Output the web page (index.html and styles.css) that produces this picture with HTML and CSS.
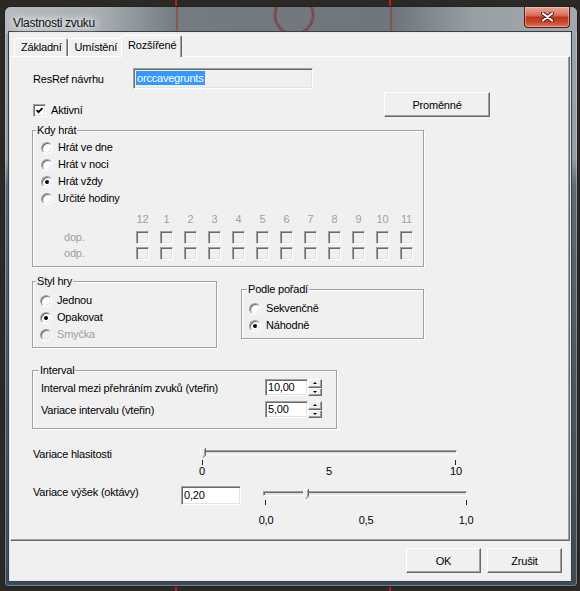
FILE: index.html
```html
<!DOCTYPE html>
<html lang="cs">
  <head>
    <meta charset="UTF-8" />
    <meta name="viewport" content="width=device-width, initial-scale=1.0" />
    <title>Vlastnosti zvuku</title>
    <link rel="stylesheet" href="styles.css">
  </head>
  <body>
    <div class="window">
      <!-- Title bar -->
      <div class="titlebar">
        <span class="title">Vlastnosti zvuku</span>
        <button class="close" aria-label="Zavřít">
          <svg width="13" height="10" viewBox="0 0 13 10">
            <path d="M2 1.5 L11 8.5 M11 1.5 L2 8.5" stroke="#4a1a12" stroke-width="4" stroke-linecap="round" />
            <path d="M2 1.5 L11 8.5 M11 1.5 L2 8.5" stroke="#fff" stroke-width="2.2" stroke-linecap="round" />
          </svg>
        </button>
      </div>

      <div class="client">
        <!-- Tabs -->
        <div class="tabs">
          <span class="tab">Základní</span>
          <span class="tab">Umístění</span>
          <span class="tab active">Rozšířené</span>
        </div>

        <div class="panel">
          <div class="field-row">
            <label class="field-label">ResRef návrhu</label>
            <div class="textbox readonly"><span class="selected">orccavegrunts</span></div>
          </div>

          <div class="check-row">
            <label class="check-label">
              <span class="checkbox">
                <svg width="7" height="7" viewBox="0 0 7 7">
                  <path d="M0.5 3 L2.5 5.2 L6.5 1" fill="none" stroke="#000" stroke-width="1.8" />
                </svg>
              </span>
              Aktivní
            </label>
            <button class="btn btn-vars">Proměnné</button>
          </div>

          <!-- When to play -->
          <div class="group group-when">
            <span class="group-title">Kdy hrát</span>
            <div class="option"><span class="radio"></span>Hrát ve dne</div>
            <div class="option"><span class="radio"></span>Hrát v noci</div>
            <div class="option"><span class="radio checked"></span>Hrát vždy</div>
            <div class="option"><span class="radio"></span>Určité hodiny</div>

            <div class="hours">
              <span></span>
              <span class="hour">12</span>
              <span class="hour">1</span>
              <span class="hour">2</span>
              <span class="hour">3</span>
              <span class="hour">4</span>
              <span class="hour">5</span>
              <span class="hour">6</span>
              <span class="hour">7</span>
              <span class="hour">8</span>
              <span class="hour">9</span>
              <span class="hour">10</span>
              <span class="hour">11</span>

              <span class="hours-label">dop.</span>
              <span class="checkbox disabled"></span>
              <span class="checkbox disabled"></span>
              <span class="checkbox disabled"></span>
              <span class="checkbox disabled"></span>
              <span class="checkbox disabled"></span>
              <span class="checkbox disabled"></span>
              <span class="checkbox disabled"></span>
              <span class="checkbox disabled"></span>
              <span class="checkbox disabled"></span>
              <span class="checkbox disabled"></span>
              <span class="checkbox disabled"></span>
              <span class="checkbox disabled"></span>

              <span class="hours-label">odp.</span>
              <span class="checkbox disabled"></span>
              <span class="checkbox disabled"></span>
              <span class="checkbox disabled"></span>
              <span class="checkbox disabled"></span>
              <span class="checkbox disabled"></span>
              <span class="checkbox disabled"></span>
              <span class="checkbox disabled"></span>
              <span class="checkbox disabled"></span>
              <span class="checkbox disabled"></span>
              <span class="checkbox disabled"></span>
              <span class="checkbox disabled"></span>
              <span class="checkbox disabled"></span>
            </div>
          </div>

          <!-- Play style / order -->
          <div class="group-row">
            <div class="group group-style">
              <span class="group-title">Styl hry</span>
              <div class="option"><span class="radio"></span>Jednou</div>
              <div class="option"><span class="radio checked"></span>Opakovat</div>
              <div class="option disabled"><span class="radio disabled"></span>Smyčka</div>
            </div>
            <div class="group group-order">
              <span class="group-title">Podle pořadí</span>
              <div class="option"><span class="radio"></span>Sekvenčně</div>
              <div class="option"><span class="radio checked"></span>Náhodně</div>
            </div>
          </div>

          <!-- Interval -->
          <div class="group group-interval">
            <span class="group-title">Interval</span>
            <div class="spin-row">
              <span class="spin-label">Interval mezi přehráním zvuků (vteřin)</span>
              <div class="textbox number">10,00</div>
              <div class="spin"><span class="spin-btn up"></span><span class="spin-btn down"></span></div>
            </div>
            <div class="spin-row">
              <span class="spin-label">Variace intervalu (vteřin)</span>
              <div class="textbox number">5,00</div>
              <div class="spin"><span class="spin-btn up"></span><span class="spin-btn down"></span></div>
            </div>
          </div>

          <!-- Volume variation -->
          <div class="slider-row volume">
            <span class="slider-label">Variace hlasitosti</span>
            <div class="slider">
              <div class="track"></div>
              <svg class="thumb" width="6" height="10" viewBox="0 0 6 10">
                <polygon points="0,0 6,0 6,7 3,10 0,7" fill="#f0f0f0" />
                <path d="M0.5 7 V0.5 H5" fill="none" stroke="#fff" />
                <path d="M5.5 0 V7.2 L3 9.7" fill="none" stroke="#696969" />
                <path d="M4.5 1 V7 L3 8.5" fill="none" stroke="#a0a0a0" />
              </svg>
              <div class="ticks"></div>
              <div class="scale"><span>0</span><span>5</span><span>10</span></div>
            </div>
          </div>

          <!-- Pitch variation -->
          <div class="slider-row pitch">
            <span class="slider-label">Variace výšek (oktávy)</span>
            <div class="textbox pitch-value">0,20</div>
            <div class="slider">
              <div class="track"></div>
              <svg class="thumb" width="6" height="10" viewBox="0 0 6 10">
                <polygon points="0,0 6,0 6,7 3,10 0,7" fill="#f0f0f0" />
                <path d="M0.5 7 V0.5 H5" fill="none" stroke="#fff" />
                <path d="M5.5 0 V7.2 L3 9.7" fill="none" stroke="#696969" />
                <path d="M4.5 1 V7 L3 8.5" fill="none" stroke="#a0a0a0" />
              </svg>
              <div class="ticks"></div>
              <div class="scale"><span>0,0</span><span>0,5</span><span>1,0</span></div>
            </div>
          </div>
        </div>

        <div class="footer">
          <button class="btn">OK</button>
          <button class="btn">Zrušit</button>
        </div>
      </div>
    </div>
  </body>
</html>
```

FILE: styles.css
```css
body {
  margin: 0;
  width: 580px;
  height: 591px;
  overflow: hidden;
  font-family: "Liberation Sans", Arial, sans-serif;
  font-size: 11px;
  letter-spacing: -0.2px;
  color: #000;
  background:
    linear-gradient(90deg, transparent 175px, #b32020 175px, #b32020 177px, transparent 177px,
      transparent 389px, #b32020 389px, #b32020 391px, transparent 391px),
    #2c2925;
}

/* window frame */
.window {
  box-sizing: border-box;
  width: 574px;
  height: 581px;
  margin: 6px 0 0 4px;
  padding: 0 7px 6px 5px;
  border: 1px solid #1d232a;
  border-radius: 7px 7px 4px 4px;
  background: linear-gradient(180deg, #9fa4a9 0, #979ca1 26%, #5f6a74 31%, #4d5a66 60%, #3e4a56 100%);
  box-shadow: inset 0 0 0 1px rgba(255, 255, 255, 0.3);
}
.titlebar {
  display: flex;
  align-items: flex-start;
  height: 26px;
  margin: 0 -7px 0 -5px;
  padding: 0 7px 0 5px;
  border-radius: 6px 6px 0 0;
  background:
    linear-gradient(90deg, transparent 171px, rgba(150, 40, 40, 0.45) 171px, rgba(150, 40, 40, 0.45) 173px, transparent 173px,
      transparent 385px, rgba(150, 40, 40, 0.45) 385px, rgba(150, 40, 40, 0.45) 387px, transparent 387px),
    radial-gradient(circle at 289px 8px, transparent 17px, rgba(130, 35, 35, 0.5) 18px, rgba(130, 35, 35, 0.5) 20px, transparent 21px),
    linear-gradient(90deg, #b7bbbf 0, #a9aeb2 95px, #757b81 170px, #6f757b 390px, #9a9fa4 470px, #a3a8ac 100%);
}
.title {
  margin-top: 8px;
  padding-left: 3px;
  font-size: 12px;
  line-height: 16px;
  letter-spacing: -0.3px;
  color: #111;
  text-shadow: 0 0 6px #fff, 0 0 10px #fff, 0 0 14px rgba(255, 255, 255, 0.8);
}
.close {
  display: flex;
  align-items: center;
  justify-content: center;
  width: 46px;
  height: 21px;
  margin-left: auto;
  padding: 0;
  border: 1px solid #4c1d14;
  border-top: 0;
  border-radius: 0 0 4px 4px;
  background: linear-gradient(180deg, #e9a697 0, #dc735f 40%, #c0341c 52%, #c8452b 75%, #e07556 100%);
  box-shadow: inset 0 0 0 1px rgba(255, 220, 210, 0.45);
}

.client {
  box-sizing: border-box;
  width: 560px;
  height: 547px;
  background: #f0f0f0;
  box-shadow: 0 0 0 1px #e6eaee, 0 0 0 2px #34414d;
}

/* tabs */
.tabs {
  display: flex;
  align-items: flex-end;
  box-sizing: border-box;
  height: 23px;
  padding-left: 4px;
}
.tab {
  box-sizing: border-box;
  height: 18px;
  padding: 2px 5px 0 6px;
  line-height: 13px;
  white-space: nowrap;
  border: 1px solid;
  border-color: #fff #696969 transparent #fff;
  border-bottom: 0;
  border-radius: 2px 2px 0 0;
  box-shadow: inset -1px 0 #a0a0a0;
}
.tab.active {
  position: relative;
  z-index: 1;
  height: 22px;
  padding-top: 3px;
  margin: 0 -2px -1px;
  background: #f0f0f0;
}
.panel {
  box-sizing: border-box;
  height: 485px;
  padding: 11px 0 0 21px;
  border: 1px solid;
  border-color: #fff #696969 #696969 #fff;
  box-shadow: inset -1px -1px #a0a0a0;
}
.footer {
  display: flex;
  justify-content: flex-end;
  gap: 6px;
  padding: 7px 8px 0 0;
}

/* controls */
.btn {
  box-sizing: border-box;
  width: 75px;
  height: 25px;
  padding: 0;
  font: inherit;
  letter-spacing: inherit;
  color: #000;
  background: #f0f0f0;
  border: 1px solid;
  border-color: #fff #696969 #696969 #fff;
  box-shadow: inset -1px -1px #a0a0a0;
}
.textbox {
  box-sizing: border-box;
  background: #fff;
  border: 1px solid;
  border-color: #a0a0a0 #fff #fff #a0a0a0;
  box-shadow: inset 1px 1px #696969, inset -1px -1px #e3e3e3;
  white-space: nowrap;
}
.textbox.readonly {
  background: #f0f0f0;
}
.checkbox {
  box-sizing: border-box;
  display: flex;
  align-items: center;
  justify-content: center;
  flex: none;
  width: 13px;
  height: 13px;
  background: #fff;
  border: 1px solid;
  border-color: #a0a0a0 #fff #fff #a0a0a0;
  box-shadow: inset 1px 1px #696969, inset -1px -1px #e3e3e3;
}
.checkbox.disabled {
  background: #f0f0f0;
}
.radio {
  box-sizing: border-box;
  position: relative;
  flex: none;
  width: 12px;
  height: 12px;
  border-radius: 50%;
  background: #fff;
  border: 1px solid;
  border-color: #a0a0a0 #fff #fff #a0a0a0;
  box-shadow: inset 1px 1px #696969, inset -1px -1px #e3e3e3;
}
.radio.checked::after {
  content: "";
  position: absolute;
  left: 3px;
  top: 3px;
  width: 4px;
  height: 4px;
  border-radius: 50%;
  background: #000;
}
.radio.disabled {
  background: #f0f0f0;
}
.option {
  display: flex;
  align-items: center;
  gap: 5px;
  height: 17px;
  line-height: 13px;
}
.option.disabled {
  color: #a0a0a0;
}

/* top rows */
.field-row {
  display: flex;
  align-items: center;
  height: 21px;
}
.field-label {
  width: 100px;
  padding-left: 1px;
}
.field-row .textbox {
  width: 180px;
  height: 21px;
  padding: 2px 0 0 2px;
  line-height: 14px;
}
.selected {
  display: inline-block;
  padding: 0 1px;
  background: #3399ff;
  color: #fff;
}
.check-row {
  display: flex;
  align-items: flex-end;
  width: 458px;
  height: 25px;
  margin-top: 3px;
}
.check-label {
  display: flex;
  align-items: center;
  gap: 5px;
  margin-left: 1px;
  line-height: 13px;
}
.btn-vars {
  width: 106px;
  margin-left: auto;
}

/* group boxes */
.group {
  box-sizing: border-box;
  position: relative;
  border: 1px solid #a0a0a0;
  box-shadow: 1px 1px #fff, inset 1px 1px #fff;
}
.group-title {
  position: absolute;
  top: -7px;
  left: 3px;
  padding: 0 1px;
  line-height: 13px;
  background: #f0f0f0;
}
.group-when {
  width: 392px;
  margin-top: 13px;
  padding: 8px 0 6px 8px;
}
.hours {
  display: grid;
  grid-template-columns: 84px repeat(12, 13px);
  grid-template-rows: 18px 16px 13px;
  column-gap: 11px;
  align-items: start;
  margin-top: 6px;
  line-height: 13px;
  color: #a0a0a0;
}
.hour {
  text-align: center;
}
.hours-label {
  padding-left: 23px;
}
.group-row {
  display: flex;
  align-items: flex-start;
  margin-top: 14px;
}
.group-style {
  width: 185px;
  padding: 10px 0 4px 7px;
}
.group-order {
  width: 183px;
  margin: 8px 0 0 24px;
  padding: 10px 0 4px 7px;
}
.group-order .group-title {
  left: 5px;
}
.group-interval {
  width: 305px;
  margin-top: 22px;
  padding: 7px 0 6px 8px;
}
.group-interval .group-title {
  left: 6px;
}
.spin-row {
  display: flex;
  align-items: flex-start;
  height: 22px;
}
.spin-label {
  width: 224px;
  margin-top: 4px;
  line-height: 13px;
  white-space: nowrap;
}
.textbox.number {
  width: 43px;
  height: 17px;
  margin-top: 1px;
  padding: 1px 0 0 2px;
  line-height: 13px;
}
.spin {
  display: flex;
  flex-direction: column;
  width: 14px;
  height: 17px;
  margin-top: 1px;
}
.spin-btn {
  box-sizing: border-box;
  display: flex;
  align-items: center;
  justify-content: center;
  flex: 1;
  background: #f0f0f0;
  border: 1px solid;
  border-color: #fff #696969 #696969 #fff;
  box-shadow: inset -1px -1px #a0a0a0;
}
.spin-btn::after {
  content: "";
  border-left: 2px solid transparent;
  border-right: 2px solid transparent;
}
.spin-btn.up::after {
  border-bottom: 2px solid #000;
}
.spin-btn.down::after {
  border-top: 2px solid #000;
}

/* trackbars */
.slider-row {
  display: flex;
  align-items: flex-start;
}
.slider-row.volume {
  margin-top: 18px;
}
.slider-row.pitch {
  margin-top: 7px;
}
.slider-label {
  margin-top: 1px;
  padding-left: 1px;
  line-height: 13px;
  white-space: nowrap;
}
.volume .slider-label {
  width: 159px;
}
.pitch .slider-label {
  width: 148px;
}
.pitch-value {
  width: 60px;
  height: 19px;
  margin-top: 1px;
  padding: 2px 0 0 2px;
  line-height: 13px;
}
.slider {
  position: relative;
}
.track {
  box-sizing: border-box;
  height: 5px;
  background: #e3e3e3;
  border: 1px solid;
  border-color: #a0a0a0 #fff #fff #a0a0a0;
  box-shadow: inset 1px 1px #696969;
}
.thumb {
  position: absolute;
  display: block;
}
.ticks {
  box-sizing: border-box;
  height: 5px;
  border-left: 1px solid #222;
  border-right: 1px solid #222;
}
.scale {
  display: flex;
  justify-content: space-between;
  line-height: 13px;
}
.scale span {
  text-align: center;
}

.volume .slider {
  width: 274px;
}
.volume .track {
  width: 256px;
  margin: 3px 0 0 9px;
}
.volume .thumb {
  top: 1px;
  left: 8px;
}
.volume .ticks {
  width: 254px;
  margin: 5px 0 0 10px;
}
.volume .scale span {
  width: 20px;
}

.pitch .slider {
  width: 224px;
  margin-left: 13px;
}
.pitch .track {
  width: 204px;
  margin: 6px 0 0 9px;
}
.pitch .thumb {
  top: 4px;
  left: 49px;
}
.pitch .ticks {
  width: 202px;
  margin: 4px 0 0 11px;
}
.pitch .scale {
  margin-top: 9px;
}
.pitch .scale span {
  width: 24px;
}
```
